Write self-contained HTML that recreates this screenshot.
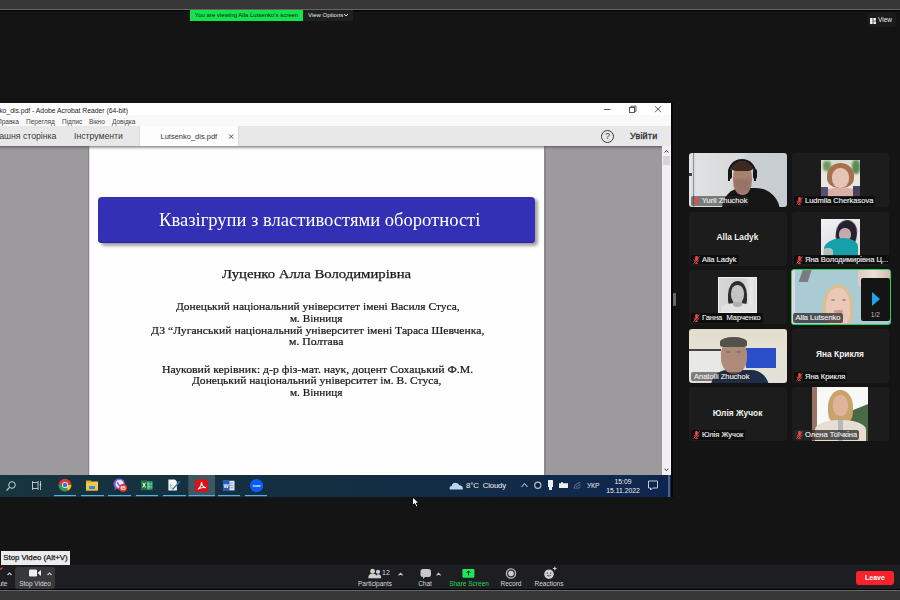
<!DOCTYPE html>
<html><head><meta charset="utf-8">
<style>
*{margin:0;padding:0;box-sizing:border-box}
html,body{width:900px;height:600px;overflow:hidden;background:#141414;font-family:"Liberation Sans",sans-serif}
.a{position:absolute}
.nw{white-space:nowrap}
.serif{font-family:"Liberation Serif",serif}
.pl{transform-origin:0 0;line-height:normal;-webkit-text-stroke:0.22px currentColor}
</style></head><body>
<!-- top bar -->
<div class="a" style="left:0;top:0;width:900px;height:9px;background:#363636"></div>
<div class="a" style="left:0;top:9px;width:900px;height:1px;background:#686868"></div>
<div class="a" style="left:0;top:10px;width:900px;height:1px;background:#000"></div>
<div class="a nw" style="left:190px;top:10px;width:113px;height:10.5px;background:#14e34e;color:#0b1d0f;font-size:6px;line-height:10px;text-align:center">You are viewing Alla Lutsenko's screen</div>
<div class="a nw" style="left:303px;top:10px;width:50px;height:10.5px;background:#1d1f21;color:#e8e8e8;font-size:6px;line-height:10px;padding-left:5px">View Options</div>
<svg class="a" style="left:343px;top:12px" width="6" height="6"><path d="M1 2 L3 4 L5 2" stroke="#e8e8e8" stroke-width="1" fill="none"/></svg>
<div class="a nw" style="left:867px;top:13px;width:29px;height:14px;background:#1b1b1b;border-radius:3px;color:#eee;font-size:6.5px;line-height:14px;padding-left:11px">View</div>
<svg class="a" style="left:869px;top:16.5px" width="8" height="8"><rect x="1" y="1" width="6" height="6" fill="#eee"/><rect x="3.6" y="1" width="0.8" height="6" fill="#333"/><rect x="4.4" y="3.6" width="2.6" height="0.8" fill="#333"/></svg>

<!-- Acrobat window -->
<div class="a" style="left:0;top:103px;width:671px;height:372px;background:#fff;overflow:hidden">
  <div class="a nw" style="left:-4.6px;top:2.5px;font-size:6.8px;line-height:10px;color:#222">nko_dis.pdf - Adobe Acrobat Reader (64-bit)</div>
  <div class="a" style="left:0;top:12px;width:671px;height:11px;background:#f9f9f9"></div>
  <div class="a nw" style="left:-3px;top:13.5px;font-size:6.5px;line-height:9px;color:#444">Правка</div>
  <div class="a nw" style="left:26px;top:13.5px;font-size:6.5px;line-height:9px;color:#444">Перегляд</div>
  <div class="a nw" style="left:62px;top:13.5px;font-size:6.5px;line-height:9px;color:#444">Підпис</div>
  <div class="a nw" style="left:89px;top:13.5px;font-size:6.5px;line-height:9px;color:#444">Вікно</div>
  <div class="a nw" style="left:112px;top:13.5px;font-size:6.5px;line-height:9px;color:#444">Довідка</div>
  <div class="a" style="left:0;top:23px;width:671px;height:20px;background:#e9e8e9"></div>
  <div class="a nw" style="left:-17.6px;top:28.3px;font-size:8.7px;line-height:10px;color:#3a3a3a">Домашня сторінка</div>
  <div class="a nw" style="left:74px;top:28.3px;font-size:8.7px;line-height:10px;color:#3a3a3a">Інструменти</div>
  <div class="a" style="left:139px;top:23px;width:98.5px;height:20px;background:#fefdfe;border-left:1px solid #dddbdd"></div>
  <div class="a nw" style="left:160.5px;top:29px;font-size:7.5px;line-height:9px;color:#333">Lutsenko_dis.pdf</div>
  <svg class="a" style="left:228px;top:30px" width="7" height="7"><path d="M1.2 1.5 L5.2 5.5 M5.2 1.5 L1.2 5.5" stroke="#333" stroke-width="0.9"/></svg>
  <div class="a" style="left:237.5px;top:23px;width:1px;height:20px;background:#dcdadc"></div>
  <!-- window controls -->
  <svg class="a" style="left:595px;top:0" width="76" height="23">
    <path d="M9 6.5 h6.5" stroke="#444" stroke-width="0.9"/>
    <rect x="34.5" y="4.5" width="5" height="5" fill="none" stroke="#444" stroke-width="0.9"/>
    <path d="M36 4.5 V3.2 H41 V8.2 H39.5" fill="none" stroke="#444" stroke-width="0.9"/>
    <path d="M60 3.2 L66 9.2 M66 3.2 L60 9.2" stroke="#444" stroke-width="0.9"/>
  </svg>
  <div class="a" style="left:601px;top:27px;width:13px;height:13px;border:1.4px solid #3a3a3a;border-radius:50%;font-size:8.5px;line-height:10.5px;text-align:center;color:#333">?</div>
  <div class="a nw" style="left:630px;top:28px;font-size:9px;line-height:10px;color:#333;-webkit-text-stroke:0.35px #333;letter-spacing:0.2px">Увійти</div>
  <!-- content -->
  <div class="a" style="left:0;top:43px;width:662px;height:329px;background:#9c9a9d"></div>
  <div class="a" style="left:662px;top:43px;width:9px;height:329px;background:#f1eff1"></div>
  <div class="a" style="left:670px;top:43px;width:1px;height:329px;background:#fafafa"></div>
  <div class="a" style="left:663px;top:52.7px;width:7px;height:9px;background:#d5d3d5"></div>
  <svg class="a" style="left:662px;top:43px" width="9" height="329"><path d="M2.6 6.5 L4.5 4.5 L6.4 6.5" stroke="#333" stroke-width="1" fill="none"/><path d="M2.6 322.7 L4.5 324.7 L6.4 322.7" stroke="#333" stroke-width="1" fill="none"/></svg>
  <div class="a" style="left:87.5px;top:43px;width:1px;height:329px;background:#878589"></div>
  <div class="a" style="left:544px;top:43px;width:1.5px;height:329px;background:#8a888c"></div>
  <div class="a" style="left:88.5px;top:43px;width:455.5px;height:329px;background:#fefefe;border-left:1px solid #e4e3e5"></div>
  <div class="a" style="left:0;top:43px;width:662px;height:3.5px;background:linear-gradient(rgba(70,70,70,.62),rgba(90,90,90,.2) 60%,rgba(90,90,90,0))"></div>
  <!-- slide title box -->
  <div class="a" style="left:101px;top:96px;width:437px;height:47px;background:#a4a4a4;border-radius:4px;filter:blur(1.4px)"></div>
  <div class="a" style="left:98px;top:93.6px;width:437px;height:46.3px;background:#3430b6;border-radius:4px;box-shadow:inset 0 -1px 0 #2a22ac"></div>
  <div class="a nw serif pl" id="pl0" style="left:159.14px;top:105.97px;font-size:19px;color:#fff;transform:scaleX(0.9772);-webkit-text-stroke:0">Квазігрупи з властивостями оборотності</div>
  <div class="a nw serif pl" id="pl1" style="left:222.00px;top:163.90px;font-size:12.8px;color:#1a1a1a;transform:scaleX(1.1520);-webkit-text-stroke:0.25px #1a1a1a">Луценко Алла Володимирівна</div>
  <div class="a nw serif pl" id="pl2" style="left:175.64px;top:197.37px;font-size:10.7px;color:#1a1a1a;transform:scaleX(1.0719)">Донецький національний університет імені Василя Стуса,</div>
  <div class="a nw serif pl" id="pl3" style="left:289.95px;top:209.07px;font-size:10.7px;color:#1a1a1a;transform:scaleX(1.0482)">м. Вінниця</div>
  <div class="a nw serif pl" id="pl4" style="left:150.97px;top:220.77px;font-size:10.7px;color:#1a1a1a;transform:scaleX(1.0912)">ДЗ “Луганський національний університет імені Тараса Шевченка,</div>
  <div class="a nw serif pl" id="pl5" style="left:288.90px;top:232.47px;font-size:10.7px;color:#1a1a1a;transform:scaleX(1.0984)">м. Полтава</div>
  <div class="a nw serif pl" id="pl6" style="left:162.30px;top:259.77px;font-size:10.7px;color:#1a1a1a;transform:scaleX(1.1024)">Науковий керівник: д-р фіз-мат. наук, доцент Сохацький Ф.М.</div>
  <div class="a nw serif pl" id="pl7" style="left:191.86px;top:271.47px;font-size:10.7px;color:#1a1a1a;transform:scaleX(1.0793)">Донецький національний університет ім. В. Стуса,</div>
  <div class="a nw serif pl" id="pl8" style="left:289.95px;top:283.17px;font-size:10.7px;color:#1a1a1a;transform:scaleX(1.0482)">м. Вінниця</div>
</div>
</div>

<div class="a" style="left:671px;top:103px;width:2px;height:394px;background:#050505"></div>
<!-- taskbar -->
<div class="a" style="left:0;top:475px;width:671px;height:22px;background:linear-gradient(90deg,#17343f 0%,#15303f 30%,#132d44 60%,#112a4a 80%,#0f2550 100%)"></div>

<!-- gallery -->
<!-- taskbar icons -->
<div class="a" style="left:0;top:475px;width:671px;height:22px">
  <svg class="a" style="left:0;top:0" width="671" height="22">
    <!-- search -->
    <circle cx="12" cy="10" r="3.3" fill="none" stroke="#c9d2d6" stroke-width="1"/>
    <path d="M9.6 12.4 L6.5 15.5" stroke="#c9d2d6" stroke-width="1.1"/>
    <!-- task view -->
    <rect x="32.5" y="7.5" width="5.5" height="6" fill="none" stroke="#b8c4c8" stroke-width="1"/>
    <path d="M32 6 L33.5 7.5 M38.5 6 L37.5 7.5 M32 15 L33.5 13.5 M38.5 15 L37.5 13.5 M40.5 6 v9" stroke="#b8c4c8" stroke-width="0.9"/>
    <circle cx="40.5" cy="9.5" r="0.8" fill="#e0e8ea"/>
    <!-- underlines -->
    <g fill="#56b0e0">
      <rect x="54" y="20" width="22" height="1.2"/>
      <rect x="81" y="20" width="23" height="1.2"/>
      <rect x="108" y="20" width="23" height="1.2"/>
      <rect x="136" y="20" width="22" height="1.2"/>
      <rect x="163" y="20" width="23" height="1.2"/>
      <rect x="188.5" y="20" width="26.5" height="1.2"/>
      <rect x="218" y="20" width="22" height="1.2"/>
      <rect x="245" y="20" width="22" height="1.2"/>
    </g>
    <!-- acrobat highlight -->
    <rect x="188.3" y="0" width="26.7" height="20" fill="#3d5862"/>
    <!-- chrome -->
    <circle cx="65" cy="10" r="6.3" fill="#e0382e"/>
    <path d="M65 10 L58.7 10 A6.3 6.3 0 0 0 68.2 15.5 Z" fill="#2aa24c"/>
    <path d="M65 10 L68.2 15.5 A6.3 6.3 0 0 0 71.3 10 L65 10 Z" fill="#f5c32a"/>
    <path d="M58.7 10 A6.3 6.3 0 0 0 62 15.4 L65 10Z" fill="#2aa24c"/>
    <circle cx="65" cy="10" r="3" fill="#fff"/>
    <circle cx="65" cy="10" r="2.3" fill="#2c78e6"/>
    <!-- explorer -->
    <rect x="86" y="6.5" width="12" height="9" fill="#f5c84a"/>
    <rect x="86" y="5.5" width="5" height="2" fill="#e0a82a"/>
    <rect x="89" y="11" width="6" height="3" fill="#2f8ee0"/>
    <rect x="86" y="14.5" width="12" height="1.2" fill="#e0a82a"/>
    <!-- viber -->
    <path d="M119.5 3.6 a5.6 5.4 0 1 1 -3.2 9.9 l-1.8 2.2 l0.3 -3.3 a5.6 5.4 0 0 1 4.7 -8.8z" fill="#7f63d0"/>
    <circle cx="119.6" cy="9" r="3.9" fill="#ece6fa"/>
    <path d="M117.4 7.2 q0.8 3.8 4.4 4.2" stroke="#7f63d0" stroke-width="1.5" fill="none"/>
    <circle cx="123.1" cy="13.1" r="4" fill="#e8302c"/>
    <text x="123.1" y="14.9" font-size="4.8" fill="#fff" text-anchor="middle" font-family="Liberation Sans" font-weight="bold">65</text>
    <!-- excel -->
    <rect x="145.5" y="6.2" width="7" height="8.6" fill="#21a366"/>
    <path d="M148 6.5v8 M145.5 9h7 M145.5 11.8h7" stroke="#d8f0e0" stroke-width=".6"/>
    <rect x="141" y="5.2" width="6.2" height="10" fill="#1d6f42"/>
    <path d="M142.6 7.6 L145.6 12.6 M145.6 7.6 L142.6 12.6" stroke="#fff" stroke-width="1"/>
    <!-- notepad -->
    <path d="M168.4 4.5 h6.5 l2 2 v9 h-8.5z" fill="#f4f4f4"/>
    <path d="M170 9.5 l1.5 1 l-1.5 1 M170 13 h2.5" stroke="#555" stroke-width=".6" fill="none"/>
    <path d="M172.5 14.5 L180 6.2" stroke="#2a7ad0" stroke-width="1.3"/>
    <path d="M172.2 14.8 l0.6 -1.2 l0.8 0.7z" fill="#e0a040"/>
    <!-- acrobat -->
    <rect x="195.3" y="4.6" width="12.7" height="12.2" rx="1.6" fill="#e30d12"/>
    <path d="M198.3 14 C200.3 12.5 201.5 9.5 201.6 7.3 C201.8 9.8 203.6 12.2 205.6 12.6 C203.3 12.2 200.6 12.8 198.3 14Z" fill="none" stroke="#fff" stroke-width="1.1" stroke-linejoin="round"/>
    <!-- word -->
    <rect x="228" y="5.8" width="6.5" height="9.6" fill="#e8eef8"/>
    <path d="M229 8h4.5M229 10.4h4.5M229 12.8h4.5" stroke="#4a7ac8" stroke-width=".7"/>
    <rect x="222.8" y="5" width="6.6" height="11" fill="#2b5cb5"/>
    <text x="226.1" y="12.8" font-size="5.4" fill="#fff" text-anchor="middle" font-family="Liberation Sans" font-weight="bold">W</text>
    <!-- zoom -->
    <circle cx="256.6" cy="10.7" r="6.6" fill="#0b5cff"/>
    <text x="256.6" y="11.8" font-size="3" fill="#fff" text-anchor="middle" font-family="Liberation Sans" font-weight="bold">zoom</text>
    <!-- cloud -->
    <path d="M450 14.5 q-1.5-3 1.6-3.6 q0.6-3.2 4-3.2 q3 0 3.8 2.6 q3.5 0 3.5 4.2 z" fill="#b8d4f0"/>
    <!-- caret -->
    <path d="M521.5 12 L524.5 8.5 L527.5 12" stroke="#d0d8e0" stroke-width="1" fill="none"/>
    <!-- tray icons -->
    <circle cx="537.8" cy="10.3" r="3.1" fill="none" stroke="#b8c0c8" stroke-width="1.2"/>
    <circle cx="537.8" cy="10.3" r="1.1" fill="#101a28"/>
    <rect x="548" y="5" width="5" height="7" rx="0.6" fill="#eef0f4"/>
    <rect x="549" y="12" width="3" height="3" fill="#eef0f4"/>
    <path d="M559 8.3 h2 v-1 h2 v1 h5 v4.7 h-9z" fill="#eef0f4"/>
    <path d="M574 14 q0-5.5 6.5-6.5 M576 14 q0-3.5 4.5-4.3 M578 14 q0-1.8 2.5-2.2" stroke="#7a8898" stroke-width=".8" fill="none"/>
    <!-- notification -->
    <path d="M648.5 6 h9 v7 h-5 l-2 2 v-2 h-2 z" fill="none" stroke="#d8dee6" stroke-width=".9"/>
    <rect x="668" y="0" width="2" height="22" fill="#4a6488"/><rect x="670" y="0" width="1" height="22" fill="#0f2650"/>
  </svg>
  <div class="a nw" style="left:466px;top:6px;font-size:7.8px;line-height:10px;color:#f2f2f2;letter-spacing:-0.15px">8°C&nbsp; Cloudy</div>
  <div class="a nw" style="left:587px;top:6px;font-size:6.8px;line-height:9px;color:#e8e8e8;letter-spacing:-0.2px">УКР</div>
  <div class="a nw" style="left:603px;top:2px;width:40px;text-align:center;font-size:6.8px;line-height:9px;color:#eee">15:09<br>15.11.2022</div>
</div>

<!-- gallery tiles -->
<style>
.t{position:absolute;width:98px;height:54px;background:#1c1c1c;border-radius:3px;overflow:hidden}
.c2{left:792px;width:97px}.c1{left:689px}
.lb{position:absolute;left:2px;bottom:1.4px;height:9.3px;background:rgba(10,10,10,.85);border-radius:2px;color:#ececec;-webkit-text-stroke:0.15px #ececec;font-size:7.5px;line-height:9px;white-space:nowrap;padding:0 2px 0 11px}
.mic{position:absolute;left:2px;top:1px;width:7px;height:8px}
.nm{position:absolute;left:0;width:100%;top:20.6px;text-align:center;color:#f2f2f2;font-weight:bold;font-size:8.4px;line-height:10px;white-space:nowrap;padding-right:1px}
.av{position:absolute;overflow:hidden}
</style>
<svg width="0" height="0" style="position:absolute">
 <defs>
  <symbol id="m" viewBox="0 0 7 8"><path d="M2.2 1.2 a1.3 1.3 0 0 1 2.6 0 v2.6 a1.3 1.3 0 0 1-2.6 0z" fill="#e84a4a"/><path d="M1 3.6 q0 2.4 2.5 2.4 q2.5 0 2.5-2.4 M3.5 6 v1.4 M2 7.5 h3" stroke="#e84a4a" stroke-width=".8" fill="none"/><path d="M0.6 7.6 L6.6 0.4" stroke="#e84a4a" stroke-width="1"/></symbol>
 </defs>
</svg>
<!-- 1 Yurii -->
<div class="t c1" style="top:153px;background:linear-gradient(90deg,#e6e8e9 0%,#dcdedf 3%,#cfd2d3 5%,#e0e2e3 7%,#dadcdd 30%,#d6d8d9 56%,#cbd0d4 58%,#c6ccd0 100%)">
  <div class="av" style="left:4px;top:0;width:1.2px;height:54px;background:#8f9598"></div>
  <div class="av" style="left:0;top:20px;width:3px;height:3px;background:#444"></div>
  <div class="av" style="left:33px;top:35px;width:58px;height:24px;background:#151515;border-radius:22px 26px 0 0;filter:blur(.4px)"></div>
  <div class="av" style="left:44px;top:11px;width:19px;height:31px;background:#a88070;border-radius:45% 45% 48% 48%;filter:blur(.5px)"></div>
  <div class="av" style="left:45px;top:26px;width:16px;height:14px;background:#8a6a5e;border-radius:0 0 50% 50%;opacity:.5;filter:blur(.8px)"></div>
  <div class="av" style="left:42px;top:8px;width:22px;height:10px;background:#3c2a22;border-radius:50% 50% 25% 25%;filter:blur(.4px)"></div>
  <div class="av" style="left:39px;top:6px;width:28px;height:22px;border:2px solid #151515;border-bottom:none;border-radius:14px 14px 0 0;filter:blur(.3px)"></div>
  <div class="av" style="left:38.5px;top:16px;width:4px;height:10px;background:#151515;border-radius:2px"></div>
  <div class="av" style="left:63.5px;top:16px;width:4px;height:10px;background:#151515;border-radius:2px"></div>
  <div class="lb" style="background:rgba(40,40,40,.55)">Yurii Zhuchok<svg class="mic"><use href="#m"/></svg></div>
</div>
<!-- 2 Ludmila -->
<div class="t c2" style="top:153px">
  <div class="av" style="left:29px;top:7px;width:38.7px;height:37px;background:linear-gradient(180deg,#d8dcd0 0%,#e8e6e0 40%,#ece8e4 100%)">
    <div class="av" style="left:2px;top:1px;width:8px;height:10px;background:#6a9a60;border-radius:40%;filter:blur(1px)"></div>
    <div class="av" style="left:31px;top:0;width:8px;height:14px;background:#5a8a50;border-radius:40%;filter:blur(1px)"></div>
    <div class="av" style="left:6px;top:3px;width:27px;height:25px;background:#a8704e;border-radius:50% 50% 40% 40%;filter:blur(.5px)"></div>
    <div class="av" style="left:11px;top:8px;width:17px;height:20px;background:#e4c4b4;border-radius:45%;filter:blur(.4px)"></div>
    <div class="av" style="left:3px;top:28px;width:34px;height:10px;background:#d8b0a8;border-radius:40% 40% 0 0"></div>
    <div class="av" style="left:0;top:27px;width:7px;height:11px;background:#5a5070;filter:blur(.6px)"></div>
    <div class="av" style="left:32px;top:26px;width:7px;height:12px;background:#4a4060;filter:blur(.6px)"></div>
  </div>
  <div class="lb">Ludmila Cherkasova<svg class="mic"><use href="#m"/></svg></div>
</div>
<!-- 3 Alla Ladyk -->
<div class="t c1" style="top:211.5px">
  <div class="nm">Alla Ladyk</div>
  <div class="lb">Alla Ladyk<svg class="mic"><use href="#m"/></svg></div>
</div>
<!-- 4 Yana V -->
<div class="t c2" style="top:211.5px">
  <div class="av" style="left:29px;top:7px;width:38.7px;height:37.5px;background:linear-gradient(160deg,#f2f2f4 0%,#e6e6ea 45%,#e8dcd4 100%)">
    <div class="av" style="left:14.5px;top:1.5px;width:21px;height:26px;background:#262030;border-radius:50% 50% 35% 40%;filter:blur(.4px);transform:rotate(8deg)"></div>
    <div class="av" style="left:18px;top:9.5px;width:12px;height:13px;background:#c8a8b0;border-radius:45%"></div>
    <div class="av" style="left:3px;top:19px;width:34px;height:19px;background:#15a0aa;border-radius:60% 45% 0 0;filter:blur(.4px)"></div>
    <div class="av" style="left:2px;top:29px;width:10px;height:9px;background:#d8c8c0;border-radius:40%;opacity:.8;filter:blur(.6px)"></div>
  </div>
  <div class="lb">Яна Володимирівна Ц...<svg class="mic"><use href="#m"/></svg></div>
</div>
<!-- 5 Ganna -->
<div class="t c1" style="top:270px">
  <div class="av" style="left:29.4px;top:7px;width:38.6px;height:36px;background:linear-gradient(90deg,#d6d6d6,#d2d2d2 70%,#e8e8e8 85%,#dcdcdc);border:1px solid #f0f0f0">
    <div class="av" style="left:8.5px;top:3px;width:19px;height:27px;background:#2e2e2e;border-radius:50% 50% 30% 30%;filter:blur(.5px)"></div>
    <div class="av" style="left:11.5px;top:6.5px;width:13px;height:19px;background:#c4c4c4;border-radius:45% 45% 50% 50%;filter:blur(.3px)"></div>
    <div class="av" style="left:2px;top:25px;width:32px;height:12px;background:#e2e2e2;border-radius:45% 45% 0 0;filter:blur(.3px)"></div>
    <div class="av" style="left:14px;top:24px;width:9px;height:5px;background:#b0b0b0;border-radius:0 0 50% 50%"></div>
  </div>
  <div class="lb">Ганна&nbsp; Марченко<svg class="mic"><use href="#m"/></svg></div>
</div>
<!-- 6 Alla Lutsenko -->
<div class="t c2" style="top:269px;left:790.5px;width:100px;height:56px;border:1.5px solid #21d35a;background:#aacbd3">
  <div class="av" style="left:0;top:0;width:3.5px;height:54px;background:#e6d6e0"></div>
  <div class="av" style="left:9px;top:-2px;width:9px;height:14px;background:#5a5650;opacity:.65;transform:skewX(-18deg)"></div>
  <div class="av" style="left:66px;top:0;width:32px;height:16px;background:linear-gradient(90deg,#e0c8c0,#ece0d8,#d8b8b0)"></div>
  <div class="av" style="left:31px;top:14px;width:30px;height:46px;background:#d8c090;border-radius:50% 50% 40% 40%;filter:blur(.6px)"></div>
  <div class="av" style="left:34px;top:18px;width:24px;height:40px;background:#eac8b8;border-radius:45% 45% 40% 40%;filter:blur(.4px)"></div>
  <div class="av" style="left:39px;top:28.5px;width:4px;height:2px;background:#8a6460;opacity:.6;border-radius:50%"></div>
  <div class="av" style="left:50px;top:28.5px;width:4px;height:2px;background:#8a6460;opacity:.6;border-radius:50%"></div>
  <div class="av" style="left:42px;top:40px;width:9px;height:2.5px;background:#c07070;opacity:.6;border-radius:50%"></div>
  <div class="av" style="left:69.4px;top:7.7px;width:29px;height:43.6px;background:#141414;border-radius:2px">
    <div class="av" style="left:11.6px;top:14.8px;width:0;height:0;border-top:7px solid transparent;border-bottom:7px solid transparent;border-left:8.5px solid #1aa4ec"></div>
    <div class="av nw" style="left:0;width:29px;top:33px;text-align:center;color:#bbb;font-size:6.5px;line-height:8px">1/2</div>
  </div>
  <div class="lb" style="padding-left:3px;left:1px;background:rgba(30,30,30,.7)">Alla Lutsenko</div>
</div>
<!-- 7 Anatolii -->
<div class="t c1" style="top:328.5px;background:linear-gradient(180deg,#e2ddcc 0%,#e6e2d4 40%,#e2e0d8 100%)">
  <div class="av" style="left:0;top:20px;width:32px;height:2px;background:#454545"></div>
  <div class="av" style="left:0;top:22px;width:31px;height:25px;background:#e8e8e6"></div>
  <div class="av" style="left:57px;top:19px;width:30px;height:20.5px;background:#2b4fc8"></div>
  <div class="av" style="left:22px;top:41px;width:58px;height:18px;background:#1e2e4a;border-radius:20px 22px 0 0;filter:blur(.4px)"></div>
  <div class="av" style="left:31.5px;top:11px;width:26px;height:34px;background:#ae8a7a;border-radius:42% 42% 48% 48%;filter:blur(.4px)"></div>
  <div class="av" style="left:31px;top:8px;width:27px;height:10px;background:#54524a;border-radius:50% 50% 20% 20%;filter:blur(.5px)"></div>
  <div class="av" style="left:37px;top:22.5px;width:5px;height:2px;background:#6a5048;opacity:.45;border-radius:50%"></div>
  <div class="av" style="left:47px;top:22.5px;width:5px;height:2px;background:#6a5048;opacity:.45;border-radius:50%"></div>
  <div class="lb" style="padding-left:3px;background:rgba(40,40,40,.55)">Anatolii Zhuchok</div>
</div>
<!-- 8 Yana K -->
<div class="t c2" style="top:328.5px">
  <div class="nm">Яна Крикля</div>
  <div class="lb">Яна Крикля<svg class="mic"><use href="#m"/></svg></div>
</div>
<!-- 9 Yulia -->
<div class="t c1" style="top:387px">
  <div class="nm">Юлія Жучок</div>
  <div class="lb">Юлія Жучок<svg class="mic"><use href="#m"/></svg></div>
</div>
<!-- 10 Olena -->
<div class="t c2" style="top:387px">
  <div class="av" style="left:20.3px;top:0;width:55.5px;height:54px;background:#f8f8f6">
    <div class="av" style="left:0;top:0;width:5px;height:54px;background:#9a7462"></div>
    <div class="av" style="left:38px;top:20px;width:30px;height:44px;background:#4a6a46;transform:rotate(-22deg);filter:blur(.6px)"></div>
    <div class="av" style="left:16px;top:3px;width:25px;height:34px;background:#c8a46c;border-radius:50% 50% 35% 35%;filter:blur(.5px)"></div>
    <div class="av" style="left:20.5px;top:8px;width:15px;height:21px;background:#e0b49a;border-radius:45%;filter:blur(.3px)"></div>
    <div class="av" style="left:3px;top:33px;width:51px;height:22px;background:#e6ded2;border-radius:45% 45% 0 0;filter:blur(.3px)"></div>
    <div class="av" style="left:26px;top:33px;width:5px;height:21px;background:#8890a8;opacity:.5"></div>
  </div>
  <div class="lb" style="background:rgba(40,40,40,.75)">Олена Тоїчкіна<svg class="mic"><use href="#m"/></svg></div>
</div>

<!-- gallery scroll handle -->
<div class="a" style="left:673px;top:293px;width:3px;height:13px;background:#6a6a6a;border-radius:1px"></div>
<!-- cursor -->
<svg class="a" style="left:411px;top:496px" width="10" height="13"><path d="M1.5 1 L1.5 9.5 L3.6 7.6 L5.2 11 L6.8 10.3 L5.3 7 L8 7 Z" fill="#fff" stroke="#000" stroke-width="0.9"/></svg>

<!-- tooltip -->
<div class="a nw" style="left:1px;top:550.5px;width:69px;height:14px;background:#ececec;color:#1a1a1a;font-size:7.8px;line-height:14px;padding-left:2.3px;-webkit-text-stroke:0.25px #1a1a1a">Stop Video (Alt+V)</div>

<!-- bottom toolbar -->
<div class="a" style="left:0;top:565px;width:900px;height:24px;background:#1c1e21"></div>
<div class="a" style="left:0;top:589px;width:900px;height:1px;background:#000"></div>
<div class="a" style="left:0;top:590px;width:900px;height:1px;background:#686868"></div>
<div class="a" style="left:0;top:591px;width:900px;height:9px;background:#363636"></div>
<!-- bottom toolbar items -->
<div class="a" style="left:15px;top:566.5px;width:40px;height:22.5px;background:#37383a;border-radius:3px"></div>
<svg class="a" style="left:0;top:565px" width="900" height="24">
  <path d="M0 4 q2 0 2.5-1.5" stroke="#e04040" stroke-width="1.3" fill="none"/>
  <path d="M7.5 10 L9.5 8 L11.5 10" stroke="#c8c8c8" stroke-width="1.2" fill="none"/>
  <rect x="29" y="4.5" width="8" height="7" rx="1.3" fill="#eeeeee"/>
  <path d="M37.5 8 L41 5 V11 Z" fill="#eeeeee"/>
  <path d="M47.5 10 L49.5 8 L51.5 10" stroke="#c8c8c8" stroke-width="1.2" fill="none"/>
  <!-- participants -->
  <circle cx="372.6" cy="6.2" r="2.4" fill="#cfcfcf"/>
  <path d="M368.3 13.2 q0-4.6 4.3-4.6 q4.3 0 4.3 4.6z" fill="#cfcfcf"/>
  <circle cx="378" cy="6.8" r="2.1" fill="#cfcfcf"/>
  <path d="M375.6 13.2 q0.3-4 2.6-4 q3 0 3 4z" fill="#cfcfcf"/>
  <path d="M398.6 10.3 L400.6 8.3 L402.6 10.3" stroke="#c8c8c8" stroke-width="1.2" fill="none"/>
  <!-- chat -->
  <path d="M422.5 4 h6 q2.5 0 2.5 2.5 v3 q0 2.5-2.5 2.5 h-3.5 l-2 2 v-2 q-2.5 0-2.5-2.5 v-3 q0-2.5 2.5-2.5z" fill="#c8c8c8"/>
  <path d="M436.6 10.3 L438.6 8.3 L440.6 10.3" stroke="#c8c8c8" stroke-width="1.2" fill="none"/>
  <!-- share -->
  <rect x="462.4" y="4" width="12" height="8.8" rx="1.2" fill="#1fe55a"/>
  <path d="M468.5 10.5 v-4.5 M466.5 8 L468.5 5.8 L470.5 8" stroke="#0a2a12" stroke-width="1" fill="none"/>
  <!-- record -->
  <circle cx="511" cy="8.5" r="4.6" fill="#2a2a2c" stroke="#b4b4b4" stroke-width="1.4"/>
  <circle cx="511" cy="8.5" r="2.8" fill="#cfcfcf"/>
  <!-- reactions -->
  <circle cx="549" cy="9.2" r="4.8" fill="#cdcdcd"/>
  <circle cx="547.3" cy="8.2" r=".6" fill="#333"/><circle cx="550.7" cy="8.2" r=".6" fill="#333"/>
  <path d="M547 10.2 q2 2 4 0" stroke="#333" stroke-width=".7" fill="none"/>
  <path d="M553 3.5 h3.6 M554.8 1.7 v3.6" stroke="#d0d0d0" stroke-width="1.1"/>
</svg>
<div class="a nw" style="left:-7px;top:579px;font-size:6.5px;line-height:9px;color:#d8d8d8">Mute</div>
<div class="a nw" style="left:15px;top:579px;width:40px;text-align:center;font-size:6.5px;line-height:9px;color:#d8d8d8">Stop Video</div>
<div class="a nw" style="left:382px;top:567.5px;font-size:7px;line-height:9px;color:#d8d8d8">12</div>
<div class="a nw" style="left:350px;top:579px;width:50px;text-align:center;font-size:6.5px;line-height:9px;color:#d8d8d8">Participants</div>
<div class="a nw" style="left:405px;top:579px;width:40px;text-align:center;font-size:6.5px;line-height:9px;color:#d8d8d8">Chat</div>
<div class="a nw" style="left:443px;top:579px;width:52px;text-align:center;font-size:6.5px;line-height:9px;color:#22d85a">Share Screen</div>
<div class="a nw" style="left:491px;top:579px;width:40px;text-align:center;font-size:6.5px;line-height:9px;color:#d8d8d8">Record</div>
<div class="a nw" style="left:529px;top:579px;width:40px;text-align:center;font-size:6.5px;line-height:9px;color:#d8d8d8">Reactions</div>

<div class="a" style="left:856px;top:571px;width:38px;height:14px;background:#f8222a;border-radius:3px;color:#fff;font-weight:bold;font-size:7px;line-height:14px;text-align:center">Leave</div>
</body></html>
